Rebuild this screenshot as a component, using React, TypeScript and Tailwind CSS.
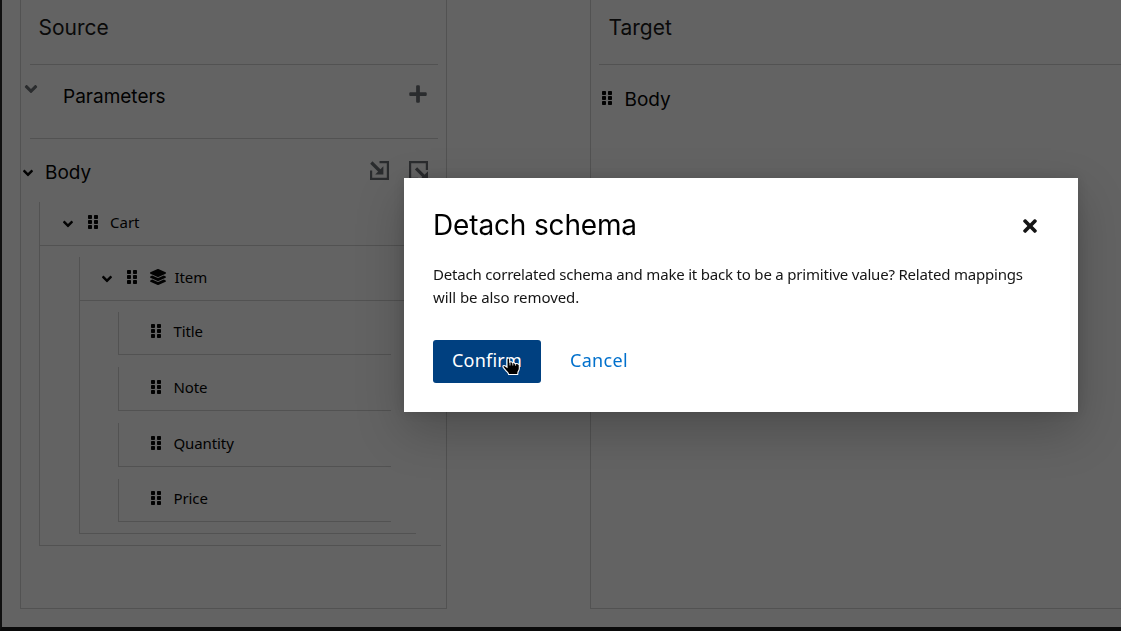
import React from "react";
import { FaAngleDown, FaGripVertical, FaLayerGroup, FaPlus, FaTimes } from "react-icons/fa";

const display = "font-['Inter','Noto_Sans',sans-serif] whitespace-nowrap";
const body = "font-['Noto_Sans',sans-serif] whitespace-nowrap";

function ImportIcon() {
  return (
    <svg width="19" height="19" viewBox="0 0 19 19" fill="none" stroke="currentColor" strokeWidth="2.2">
      <path d="M9.500 1.100h8.400v16.800H1.100V9.500" />
      <path d="M1.300 1.500l10 10" strokeWidth="3.200" />
      <path d="M13.400 5.200v8.200H5.200z" fill="currentColor" stroke="none" />
    </svg>
  );
}

function ExportIcon() {
  return (
    <svg width="19" height="19" viewBox="0 0 19 19" fill="none" stroke="currentColor" strokeWidth="2.2" overflow="visible">
      <path d="M17.900 9V1.100H1.100v16.800H9" />
      <path d="M7 7.300l9.500 9.500" strokeWidth="3.200" />
      <path d="M19 10.300V19h-8.700z" fill="currentColor" stroke="none" />
    </svg>
  );
}

function PointerCursor() {
  return (
    <svg className="absolute left-[69px] top-[17px]" width="20" height="20" viewBox="0 0 20 20">
      <path
        d="M5 2.400C5 .6 7.700.6 7.700 2.400V5c1-.5 2.300-.2 2.700.7 1-.4 2.200 0 2.600.9 1.700-.5 4.300.3 4.300 2v3.200c0 1.300-.6 2-1.300 3.200l-.3 2.500H6.600c-.3-1.700-1.300-2.300-2.500-3.700L1.400 10.700c-1.300-1.600.4-2.900 2-1.700L5 10.200z"
        fill="#000"
        stroke="#fff"
        strokeWidth="1.100"
      />
      <path d="M8 5v3.500M10.800 5.900v2.600M13.600 7v1.700" stroke="#fff" strokeWidth=".8" />
    </svg>
  );
}

function Leaf({ label, className }: { label: string; className: string }) {
  return (
    <div className={`flex w-[273px] items-start border-b border-l border-[#d2d2d2] pl-[32px] ${className}`}>
      <FaGripVertical size={16} className="mt-[11px] w-[10px]" />
      <span className={`${body} ml-[12.500px] mt-[8px] text-[15px] leading-[23px] tracking-[-0.1px]`}>{label}</span>
    </div>
  );
}

function SourcePanel() {
  return (
    <section className="h-[609px] w-[427px] shrink-0 border-x border-b border-[#d2d2d2]">
      <header className="ml-[9px] h-[65px] w-[408px] border-b border-[#d2d2d2] pl-[8.500px] pt-[14px]">
        <h2 className={`${display} text-[21px] leading-[28px] text-[#151515]`}>Source</h2>
      </header>
      <div className="ml-[9px] flex h-[74px] w-[408px] items-start border-b border-[#d2d2d2]">
        <FaAngleDown size={20} className="-ml-[9px] mt-[14px] text-[#6a6e73]" />
        <h3 className={`${display} ml-[22px] mt-[18px] text-[19px] leading-[28px]`}>Parameters</h3>
        <FaPlus size={20} className="ml-auto mr-[10px] mt-[19px] text-[#6a6e73]" />
      </div>
      <div className="flex h-[63px] items-start">
        <FaAngleDown size={16} className="-ml-px mt-[26px]" />
        <h3 className={`${display} ml-[9px] mt-[20px] text-[19px] leading-[28px]`}>Body</h3>
        <div className="ml-auto mr-[18px] mt-[22px] flex gap-[20px] text-[#6a6e73]">
          <ImportIcon />
          <ExportIcon />
        </div>
      </div>
      <div className="ml-[18px] h-[344px] w-[402px] border-b border-l border-[#d2d2d2]">
        <div className="flex h-[44px] items-start border-b border-[#d2d2d2] pl-[20px]">
          <FaAngleDown size={16} className="mt-[14px]" />
          <FaGripVertical size={16} className="ml-[12px] mt-[12px] w-[10px]" />
          <span className={`${body} ml-[12px] mt-[9px] text-[15px] leading-[23px]`}>Cart</span>
        </div>
        <div className="ml-[39px] mt-[11px] h-[277px] w-[337px] border-b border-l border-[#d2d2d2]">
          <div className="flex h-[44px] items-start border-b border-[#d2d2d2] pl-[19px]">
            <FaAngleDown size={16} className="mt-[14px]" />
            <FaGripVertical size={16} className="ml-[12px] mt-[12px] w-[10px]" />
            <FaLayerGroup size={16} className="ml-[12.500px] mt-[12px]" />
            <span className={`${body} ml-[9px] mt-[9px] text-[15px] leading-[23px] tracking-[-0.1px]`}>Item</span>
          </div>
          <div className="ml-[38px] mt-[11px] flex flex-col gap-[12px]">
            <Leaf label="Title" className="h-[43px]" />
            <Leaf label="Note" className="h-[44px] pt-px" />
            <Leaf label="Quantity" className="h-[44px] pt-px" />
            <Leaf label="Price" className="h-[43px]" />
          </div>
        </div>
      </div>
    </section>
  );
}

function TargetPanel() {
  return (
    <section className="ml-[143px] h-[609px] w-[531px] shrink-0 border-b border-l border-[#d2d2d2]">
      <header className="ml-[8px] h-[65px] border-b border-[#d2d2d2] pl-[9.500px] pt-[14px]">
        <h2 className={`${display} text-[21px] leading-[28px] text-[#151515]`}>Target</h2>
      </header>
      <div className="flex items-start pl-[11px] pt-[21px]">
        <FaGripVertical size={16} className="mt-[4px] w-[10px]" />
        <h3 className={`${display} ml-[12.500px] text-[19px] leading-[28px]`}>Body</h3>
      </div>
    </section>
  );
}

function DetachDialog() {
  return (
    <div
      role="dialog"
      className="absolute left-[404px] top-[178px] flex h-[234px] w-[674px] flex-col bg-white pl-[29px] pr-[41px] pt-[28px] text-black shadow-[0_19px_45px_0_rgba(3,3,3,0.22),0_0_10px_0_rgba(3,3,3,0.12)]"
    >
      <div className="flex h-[57px] items-start justify-between">
        <h1 className={`${display} text-[28px] leading-[38px] tracking-[-0.15px]`}>Detach schema</h1>
        <FaTimes size={20} className="mr-[0.500px] mt-[10px] w-[14px] text-[#151515]" />
      </div>
      <p className={`${body} text-[15px] leading-[23px] tracking-[-0.195px] text-[#151515]`}>
        Detach correlated schema and make it back to be a primitive value? Related mappings
        <br />
        <span className="tracking-[-0.08px]">will be also removed.</span>
      </p>
      <div className="mt-[31px] flex items-center">
        <button className={`${body} relative h-[43px] w-[108px] rounded-[3px] bg-[#004080] pb-[2px] text-[18px] tracking-[0.2px] text-white`}>
          Confirm
          <PointerCursor />
        </button>
        <button className={`${body} ml-[29px] pb-[2px] text-[18px] tracking-[0.3px] text-[#0070cc]`}>Cancel</button>
      </div>
    </div>
  );
}

export default function App() {
  return (
    <div className="relative h-[631px] w-full overflow-hidden border-b-4 border-l-2 border-b-[#151515] border-l-[#252525] bg-white text-black">
      <main className="flex pl-[18px]">
        <SourcePanel />
        <TargetPanel />
      </main>
      <div className="fixed inset-0 bg-[rgba(3,3,3,0.62)]">
        <DetachDialog />
      </div>
    </div>
  );
}
